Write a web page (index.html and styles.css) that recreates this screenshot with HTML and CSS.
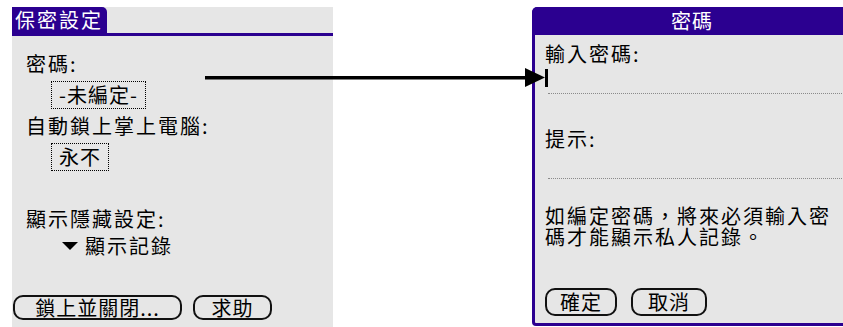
FILE: index.html
```html
<!DOCTYPE html>
<html lang="zh-Hant">
<head>
	<meta charset="UTF-8">
	<title>保密設定</title>
	<link rel="stylesheet" href="styles.css">
</head>
<body>
	<div class="page">
		<!-- 保密設定 畫面 -->
		<div class="screen left">
			<div class="tabBar"><span class="tab">保密設定</span></div>
			<div class="body">
				<div class="label first">密碼:</div>
				<div class="field pw">-未編定-</div>
				<div class="label">自動鎖上掌上電腦:</div>
				<div class="field never">永不</div>
				<div class="label third">顯示隱藏設定:</div>
				<div class="picker"><span class="tri"></span>顯示記錄</div>
			</div>
			<div class="buttons">
				<span class="btn lock">鎖上並關閉...</span>
				<span class="btn help">求助</span>
			</div>
		</div>

		<!-- 密碼 對話框 -->
		<div class="screen right">
			<div class="titleBar">密碼</div>
			<div class="body">
				<div class="label">輸入密碼:</div>
				<div class="input"><span class="cursor"></span></div>
				<div class="label hint">提示:</div>
				<div class="input empty"></div>
				<p class="note">如編定密碼，將來必須輸入密碼才能顯示私人記錄。</p>
			</div>
			<div class="buttons">
				<span class="btn ok">確定</span>
				<span class="btn cancel">取消</span>
			</div>
		</div>

		<svg class="arrow" width="345" height="24" viewBox="0 0 345 24">
			<rect x="0" y="10" width="330" height="3.5" fill="#000"/>
			<polygon points="320,2 340,11.5 320,21" fill="#000"/>
		</svg>
	</div>
</body>
</html>
```

FILE: styles.css
```css
html, body { margin: 0; padding: 0; background: #fff; overflow: hidden; }
body { width: 843px; height: 327px; font-family: "Noto Sans CJK TC", "Noto Sans CJK SC", sans-serif; font-size: 20px; color: #000; }

.page { position: relative; display: flex; padding-top: 7px; height: 320px; }

.screen { background: #e6e6e6; box-sizing: border-box; display: flex; flex-direction: column; flex-shrink: 0; }
.left { margin-left: 12px; width: 321px; height: 320px; }
.right { margin-left: 199px; width: 320px; height: 319px; border: 3px solid #2b0090; border-top: none; border-radius: 6px 6px 4px 4px; }

.tabBar { height: 26px; border-bottom: 3px solid #2b0090; display: flex; }
.tab { background: #2b0090; color: #fff; font-size: 20px; letter-spacing: 2px; line-height: 26px; padding: 0 4px 0 3px; border-radius: 0 5px 0 0; }

.left .body { padding-left: 14px; display: flex; flex-direction: column; align-items: flex-start; }
.label { line-height: 24px; height: 24px; letter-spacing: 2px; }
.left .first { margin-top: 16px; }
.field { border: 1px dotted #000; height: 26px; line-height: 26px; box-sizing: content-box; margin-left: 25px; text-align: center; letter-spacing: 1px; }
.pw { width: 93px; margin-top: 5px; margin-bottom: 5px; }
.never { width: 56px; margin-top: 5px; }
.left .third { margin-top: 36px; }
.picker { margin-left: 36px; margin-top: 3px; line-height: 24px; letter-spacing: 2px; display: flex; align-items: center; }
.tri { width: 0; height: 0; border-left: 8px solid transparent; border-right: 8px solid transparent; border-top: 8px solid #000; margin-right: 7px; }

.buttons { display: flex; margin-top: auto; }
.btn { border: 2px solid #111; border-radius: 10px; box-sizing: border-box; text-align: center; font-size: 20px; letter-spacing: 1px; }
.left .buttons { margin-bottom: 7px; }
.left .btn { height: 25px; line-height: 21px; }
.lock { width: 169px; margin-left: 1px; }
.help { width: 79px; margin-left: 11px; }

.titleBar { background: #2b0090; color: #fff; height: 28px; line-height: 28px; text-align: center; font-size: 20px; letter-spacing: 1px; border-radius: 5px 5px 0 0; margin: 0 -3px; }
.right .body { padding-left: 10px; padding-right: 5px; }
.right .label { margin-top: 7px; }
.input { height: 27px; border-bottom: 1px dotted #8a8a8a; margin-left: 3px; position: relative; }
.cursor { position: absolute; left: -3px; top: 3px; width: 3px; height: 18px; background: #000; }
.right .hint { margin-top: 33px; }
.note { margin: 26px 0 0 0; font-size: 20px; line-height: 21px; letter-spacing: 2px; }
.right .buttons { margin-bottom: 7px; padding-left: 10px; }
.right .btn { height: 28px; line-height: 24px; }
.ok { width: 72px; }
.cancel { width: 76px; margin-left: 14px; }

.arrow { position: absolute; left: 205px; top: 66px; }
```
